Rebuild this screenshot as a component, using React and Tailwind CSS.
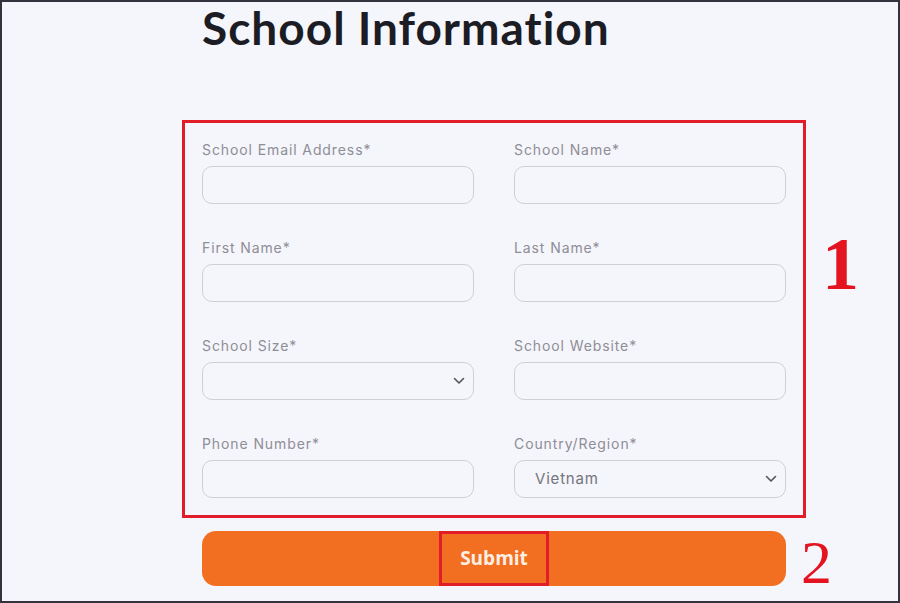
import React from 'react';

const fields = [
  { label: 'School Email Address*', type: 'input' },
  { label: 'School Name*', type: 'input' },
  { label: 'First Name*', type: 'input' },
  { label: 'Last Name*', type: 'input' },
  { label: 'School Size*', type: 'select', value: '' },
  { label: 'School Website*', type: 'input' },
  { label: 'Phone Number*', type: 'input' },
  { label: 'Country/Region*', type: 'select', value: 'Vietnam' },
];

function Chevron() {
  return (
    <svg width="12" height="8" viewBox="0 0 12 8" fill="none" className="text-[#555]">
      <path d="M1.5 1.5 6 6l4.5-4.5" stroke="currentColor" strokeWidth="1.6" strokeLinecap="round" strokeLinejoin="round" />
    </svg>
  );
}

function Field({ field }) {
  return (
    <div className="flex flex-col">
      <label className="text-[14px] leading-[18px] tracking-[0.9px] text-[#8e8e95] font-['Inter',sans-serif]">
        {field.label}
      </label>
      {field.type === 'select' ? (
        <div className="mt-[7px] h-[38px] rounded-[10px] border border-[#cfcfd6] flex items-center justify-between pl-[20px] pr-[8px]">
          <span className="text-[15px] tracking-[0.8px] text-[#74747b] font-['Inter',sans-serif]">{field.value}</span>
          <Chevron />
        </div>
      ) : (
        <div className="mt-[7px] h-[38px] rounded-[10px] border border-[#cfcfd6]" />
      )}
    </div>
  );
}

export default function App() {
  return (
    <div className="w-[900px] h-[603px] bg-[#f5f5fc] border-2 border-[#33333d] overflow-hidden relative">
      <div className="pl-[200px] pt-[2px]">
        <h1 className="text-[46px] leading-[48px] tracking-[1px] font-bold text-[#1c1c24] font-['Lato',sans-serif] [font-variant-ligatures:none]">
          School Information
        </h1>
      </div>

      <div className="ml-[180px] mt-[68px] w-[624px] border-[3px] border-[#e11d2a] pl-[17px] pr-[17px] pt-[18px] pb-[17px]">
        <div className="grid grid-cols-2 gap-x-[40px] gap-y-[35px]">
          {fields.map((f) => (
            <Field key={f.label} field={f} />
          ))}
        </div>
      </div>

      <div className="ml-[200px] mt-[13px] w-[584px] h-[55px] rounded-[14px] bg-[#f26f22] flex items-center justify-center">
        <div className="h-[55px] w-[110px] border-[3px] border-[#e11d2a] flex items-center justify-center">
          <span className="text-[19px] font-bold text-[#fdeee3] font-['Open_Sans',sans-serif]">Submit</span>
        </div>
      </div>

      <span className="absolute left-[820px] top-[225px] text-[74px] font-bold leading-none text-[#e3141f] font-['Liberation_Serif',serif]">
        1
      </span>
      <span className="absolute left-[799px] top-[529px] text-[62px] leading-none text-[#e3141f] font-['Liberation_Serif',serif]">
        2
      </span>
    </div>
  );
}
